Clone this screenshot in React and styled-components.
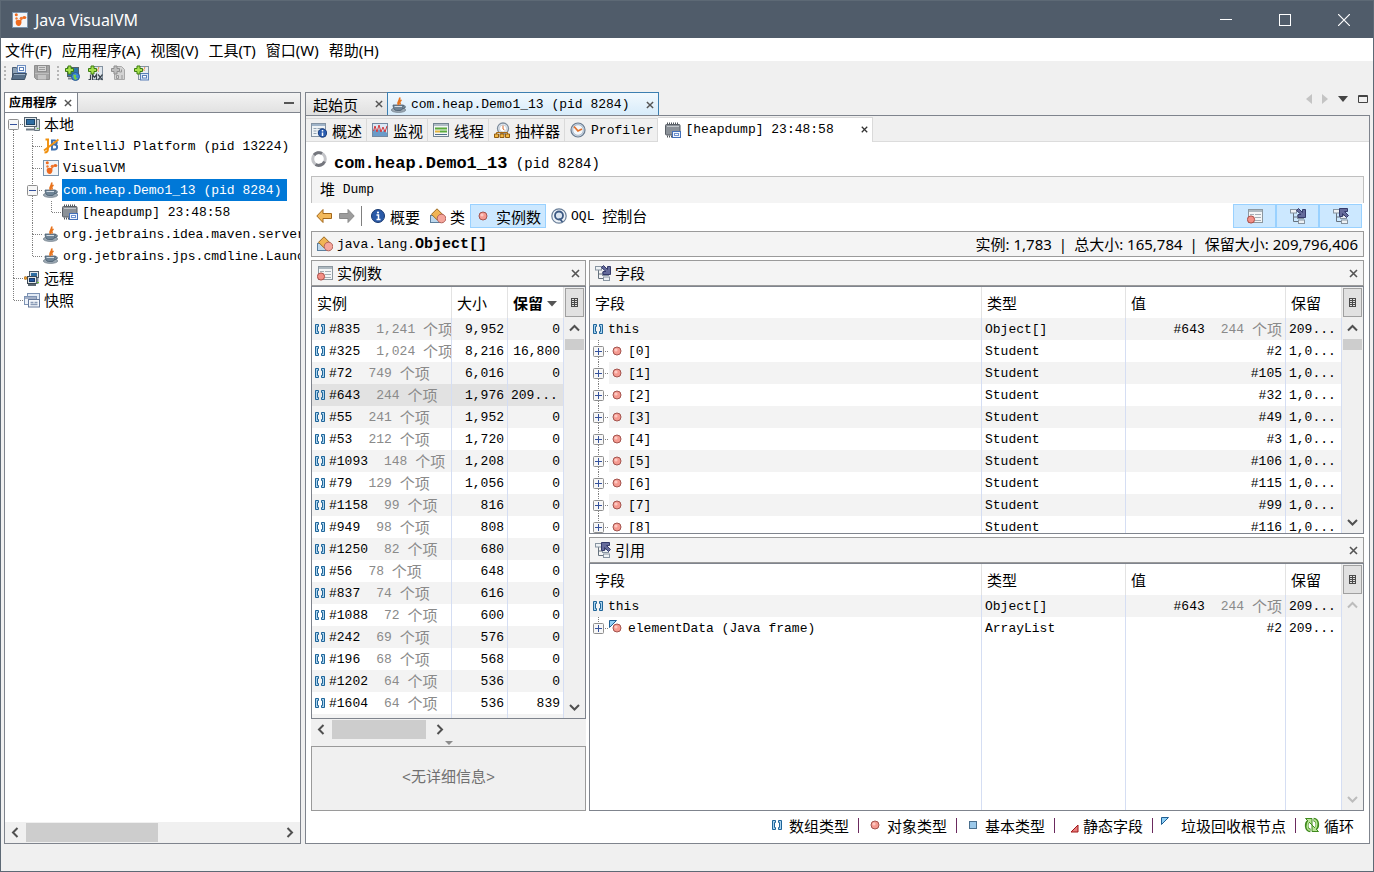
import { Fragment } from "react";
import styled, { createGlobalStyle, css } from "styled-components";

const SANS = '"Noto Sans", "Noto Sans CJK SC", sans-serif';
const MONO = '"Liberation Mono", "Noto Sans CJK SC", monospace';
const HAN = '"Noto Sans CJK SC", sans-serif';

const MENUS = ["文件(F)", "应用程序(A)", "视图(V)", "工具(T)", "窗口(W)", "帮助(H)"];

const TREE = [
  { guides: ["openRoot"], icon: "computer", label: "本地", cjk: true },
  { guides: ["pass", "tee"], icon: "intellij", label: "IntelliJ Platform (pid 13224)" },
  { guides: ["pass", "tee"], icon: "visualvm", label: "VisualVM" },
  { guides: ["pass", "open"], icon: "java", label: "com.heap.Demo1_13 (pid 8284)", selected: true },
  { guides: ["pass", "pass", "end"], icon: "heap", label: "[heapdump] 23:48:58" },
  { guides: ["pass", "tee"], icon: "java", label: "org.jetbrains.idea.maven.server.RemoteMavenServer" },
  { guides: ["pass", "end"], icon: "java", label: "org.jetbrains.jps.cmdline.Launcher" },
  { guides: ["tee"], icon: "remote", label: "远程", cjk: true },
  { guides: ["end"], icon: "snapshot", label: "快照", cjk: true },
];

const INSTANCES = [
  ["#835", "1,241", "9,952", "0"],
  ["#325", "1,024", "8,216", "16,800"],
  ["#72", "749", "6,016", "0"],
  ["#643", "244", "1,976", "209..."],
  ["#55", "241", "1,952", "0"],
  ["#53", "212", "1,720", "0"],
  ["#1093", "148", "1,208", "0"],
  ["#79", "129", "1,056", "0"],
  ["#1158", "99", "816", "0"],
  ["#949", "98", "808", "0"],
  ["#1250", "82", "680", "0"],
  ["#56", "78", "648", "0"],
  ["#837", "74", "616", "0"],
  ["#1088", "72", "600", "0"],
  ["#242", "69", "576", "0"],
  ["#196", "68", "568", "0"],
  ["#1202", "64", "536", "0"],
  ["#1604", "64", "536", "839"],
];

const FIELDS = [
  { root: true, name: "this", type: "Object[]", value: "#643", items: "244", retained: "209..." },
  ...["#2", "#105", "#32", "#49", "#3", "#106", "#115", "#99", "#116"].map((value, i) => ({
    name: `[${i}]`,
    type: "Student",
    value,
    retained: "1,0...",
    icon: "dot",
  })),
];

const REFERENCES = [
  { root: true, name: "this", type: "Object[]", value: "#643", items: "244", retained: "209..." },
  { name: "elementData (Java frame)", type: "ArrayList", value: "#2", retained: "209...", icon: "gcDot", last: true },
];

const LEGEND = [
  ["array", "数组类型"],
  ["dot", "对象类型"],
  ["primitive", "基本类型"],
  ["staticField", "静态字段"],
  ["gcRoot", "垃圾回收根节点"],
  ["loop", "循环"],
];

const cup = (
  <>
    <ellipse cx="7.500" cy="13" rx="7.200" ry="2.500" fill="#9aa7b2" stroke="#66747f" strokeWidth=".6" />
    <path d="M2 8h10.500c0 3-1.500 5.500-3.500 5.500H5.500C3.500 13.500 2 11 2 8z" fill="#6f8496" stroke="#4b5e6e" strokeWidth=".8" />
    <path d="M12 9c3-.8 3 2.500-.8 2.500" fill="none" stroke="#566b7b" strokeWidth="1.200" />
    <path d="M3.500 9.500h7.500" stroke="#d4dfe8" />
    <path d="M8.500.5C10 3 5.500 4 7.500 8M10.500 3c-2 1.200-2.200 2-1.200 4.500" fill="none" stroke="#e8731c" strokeWidth="1.700" />
  </>
);

const plus = <path d="M4 1h3v2.500h2.500v3H7V9H4V6.500H1.500v-3H4z" fill="#a6e04d" stroke="#3d7d12" />;

const hierarchy = (
  <>
    <path d="M3.500 5v8.500H8M3.500 9H8" fill="none" stroke="#66727e" />
    <rect x=".5" y="1.500" width="6" height="3.500" fill="#eef2f5" stroke="#8794a1" />
    <rect x="7.500" y="7.500" width="6" height="3" fill="#eef2f5" stroke="#8794a1" />
    <rect x="8.500" y="12" width="6" height="3.500" fill="#eef2f5" stroke="#8794a1" />
  </>
);

const objectDot = (
  <>
    <circle cx="8" cy="8" r="4" fill="#f59a90" stroke="#a3544e" />
    <circle cx="7" cy="7" r="1.600" fill="#fcc9c2" />
  </>
);

const listBase = (
  <>
    <rect x="1.500" y="1.500" width="14" height="13" fill="#f4f6f7" stroke="#8c979f" />
    <path d="M2 3h13" stroke="#aeb9c0" strokeWidth="2" />
    <path d="M3 6.500h4m1 0h6M3 9.500h4m1 0h6M8 12.500h6" stroke="#a5afb6" />
  </>
);

const brackets = (
  <path
    d="M.5.5h3v2h-1v5h1v2h-3zM9.500.5h-3v2h1v5h-1v2h3z"
    fill="#a9d3f0"
    stroke="#1f6599"
  />
);

const curl = (
  <>
    <path d="M6.500 13.500C1.500 13 2 6 4.500 4.500" fill="none" stroke="#3f8a1d" strokeWidth="3.600" />
    <path d="M1.500 1.500h6.500v6.500z" fill="#b8e596" stroke="#3f8a1d" />
    <path d="M6 13.300C2.500 12.500 2.500 7 5 4" fill="none" stroke="#b8e596" strokeWidth="1.600" />
  </>
);

const ICONS = {
  visualvm: (
    <>
      <rect x=".5" y=".5" width="15" height="15" fill="#f2f5f8" stroke="#7893ad" />
      <path d="M4 8.500c2-1.500 5.500-1 5.500 1.500 0 2-1 4-3 4S3 11 4 8.500z" fill="#ee6a1e" />
      <path d="M8.500 9l1.500-3" stroke="#ee6a1e" strokeWidth="1.200" />
      <ellipse cx="12.300" cy="5.500" rx="2" ry="1.500" fill="#ee6a1e" />
      <circle cx="9.300" cy="6.300" r="1.600" fill="#f1782f" />
      <circle cx="4.300" cy="2.800" r="1.500" fill="#ee6a1e" />
      <circle cx="4.500" cy="6.500" r="1.200" fill="#f1782f" />
    </>
  ),
  openFile: (
    <>
      <path d="M1.500 14V2.500h4l1 2h7V9" fill="#8ea3b8" stroke="#4c5f75" />
      <rect x="6.500" y=".5" width="8" height="7" fill="#f4f8fc" stroke="#6f8fc0" />
      <rect x="8.500" y="2.500" width="4" height="3" fill="#fff" stroke="#5b7fb8" />
      <path d="M.5 14.500l2-6h13l-2 6z" fill="#587089" stroke="#3d5065" />
      <path d="M3 9.500h11" stroke="#9cb0c4" />
    </>
  ),
  save: (
    <>
      <path d="M.5.500h15v14h-13l-2-2z" fill="#a3a3a3" stroke="#8e8e8e" />
      <rect x="3.500" y=".5" width="9" height="6" fill="#d5d5d5" stroke="#8e8e8e" />
      <path d="M5 2.500h6M5 4.500h6" stroke="#9c9c9c" />
      <rect x="4" y="10" width="8" height="4.500" fill="#c4c4c4" />
      <path d="M1 8.500h14" stroke="#bdbdbd" />
    </>
  ),
  addHost: (
    <>
      <rect x="3.500" y="2.500" width="11" height="9" fill="#2e74a8" stroke="#54616b" />
      <path d="M4 13.500h8" stroke="#7d8890" strokeWidth="2" />
      <circle cx="11.500" cy="11.500" r="4" fill="#3d86d8" stroke="#2c598c" />
      <path d="M9.500 9.500l3 .5-1 2 2 1.500-2.500 1.500-1.500-3z" fill="#7ad13f" />
      {plus}
    </>
  ),
  addJmx: (
    <>
      <rect x="5.500" y="1.500" width="10" height="13" fill="#dfe6ed" stroke="#8593a1" />
      <path d="M11.500 2c1 2-2 2 0 4.500" fill="none" stroke="#e97c25" />
      <path d="M3.500 9.500v5h-2M5.500 15V9.500l2 3 2-3V15M11 9.500l4.500 5.500m0-5.500L11 15" fill="none" stroke="#3b4650" strokeWidth="1.200" />
      {plus}
    </>
  ),
  addDump: (
    <>
      <path d="M4.500 1.500h7l3 3v10h-10z" fill="#d3d3d3" stroke="#a8a8a8" />
      <path d="M9.500 7h2v-2.500M6.500 10.500h2v3h-2zM12 10v4" fill="none" stroke="#979797" />
      <path d="M4 1h3v2.500h2.500v3H7V9H4V6.500H1.500v-3H4z" fill="#bdbdbd" stroke="#8f8f8f" />
    </>
  ),
  addSnapshot: (
    <>
      <rect x="5.500" y="1.500" width="10" height="13" fill="#e8edf2" stroke="#8593a1" />
      <path d="M11.500 2c1 2-2 2 0 4" fill="none" stroke="#e97c25" />
      <rect x="7.500" y="8.500" width="8" height="6.500" fill="#dbe8f8" stroke="#5b7fb8" />
      <rect x="9.500" y="10.500" width="4" height="2.500" fill="#fff" stroke="#5b7fb8" />
      {plus}
    </>
  ),
  computer: (
    <>
      <path d="M10.500 3.500h5v11h-5z" fill="#cdd4da" stroke="#68747e" />
      <rect x=".5" y="1.500" width="12" height="9" fill="#e0e6ea" stroke="#55626d" />
      <rect x="2.500" y="3.500" width="8" height="5" fill="#2f6ea3" stroke="#1b4467" />
      <path d="M2 13.500h9" stroke="#6f7b85" strokeWidth="2" />
      <path d="M13 12.500h1.500" stroke="#67c433" />
    </>
  ),
  intellij: (
    <>
      <path d="M9 1.500v10.500M8 2.500h3.500c3 0 3 4 0 4H9m2.500 0c3.500 0 3.500 5 0 5H8" fill="none" stroke="#3d6fae" strokeWidth="1.900" />
      <path d="M2.500 1.500h3.500M5 1v9.500c0 3-1 4-3.500 4M1 12.500L15.500 1.500" fill="none" stroke="#f0900d" strokeWidth="1.900" />
    </>
  ),
  java: cup,
  heap: (
    <>
      <path d="M2 1.500h12M2 14.500h6" stroke="#4f545a" strokeWidth="2" strokeDasharray="1 1" />
      <rect x=".5" y="2.500" width="14.500" height="10.500" rx="1" fill="#8b9198" stroke="#595f66" />
      <path d="M2 4.500h12" stroke="#c0c5ca" />
      <rect x="7.500" y="9.500" width="8" height="6" fill="#f0f5fd" stroke="#4470b8" />
      <rect x="9.500" y="11.500" width="4" height="2" fill="#fff" stroke="#6d92d0" />
    </>
  ),
  remote: (
    <>
      <rect x="5.500" y="1.500" width="9" height="6" fill="#e3e8ec" stroke="#4d5a65" />
      <rect x="7" y="3" width="6" height="3" fill="#2f6ea3" />
      <rect x="3.500" y="6.500" width="9" height="7" fill="#dfe5e9" stroke="#3c4853" />
      <rect x="5.500" y="8.500" width="5" height="3" fill="#2458a0" stroke="#15396b" />
      <path d="M4 15h8" stroke="#5c6872" strokeWidth="2" />
      <path d="M13.500 8v6" stroke="#7f8b95" strokeWidth="2" />
      <circle cx="1.500" cy="8" r="1.500" fill="#e89b2b" stroke="#9b5c0e" strokeWidth=".6" />
      <path d="M13 12.500h2" stroke="#67c433" />
    </>
  ),
  snapshot: (
    <>
      <rect x="3.500" y="1.500" width="12" height="8" fill="#e4ecf6" stroke="#7d93b4" />
      <rect x=".5" y="4.500" width="12" height="8" fill="#eef3fa" stroke="#7d93b4" />
      <rect x="4.500" y="7.500" width="11" height="7.500" fill="#f5f8fc" stroke="#64789a" />
      <path d="M1 6h11M6.500 10.500h3m1 0h3M6.500 12.500h7" stroke="#8a9bb6" strokeWidth="1.400" />
    </>
  ),
  overview: (
    <>
      <rect x=".5" y="1.500" width="14" height="13" fill="#eff3f6" stroke="#8493a3" />
      <path d="M1 3h13" stroke="#9fb3c8" strokeWidth="2" />
      <path d="M2.500 6.500h3m1 0h6M2.500 9h3m1 0h4M2.500 11.500h3" stroke="#93a3b2" />
      <circle cx="11.500" cy="11" r="4.200" fill="#2a5cb0" stroke="#173b7c" />
      <path d="M11.500 10.500V14M11.500 8v1.500" stroke="#fff" strokeWidth="1.500" />
    </>
  ),
  monitor: (
    <>
      <rect x=".5" y="1.500" width="15" height="13" fill="#dce8f4" stroke="#7389a2" />
      <path d="M1 14V9l2-2 2 3 2-3 3 3 2-2 3 3v3z" fill="#6b9bc8" />
      <path d="M1.500 9L3 4l2 6 2-7 2 7 2-5 2 5 2-6" fill="none" stroke="#d4393d" />
    </>
  ),
  threads: (
    <>
      <rect x=".5" y="1.500" width="15" height="13" fill="#f3f6f7" stroke="#738492" />
      <path d="M1 3h14" stroke="#b1bdc6" strokeWidth="2" />
      <path d="M2 6.500h12" stroke="#5aab3b" strokeWidth="2" />
      <path d="M2 9.500h5" stroke="#e0b53b" strokeWidth="2" />
      <path d="M7 9.500h7" stroke="#5aab3b" strokeWidth="2" />
      <path d="M2 12.500h12" stroke="#4c6d8c" />
    </>
  ),
  sampler: (
    <>
      <circle cx="9" cy="6.500" r="5.500" fill="#e7edf3" stroke="#7d8c9c" strokeWidth="1.300" />
      <circle cx="9" cy="6.500" r="3.600" fill="#fff" stroke="#b4bfcb" strokeWidth=".8" />
      <path d="M9 3.500V7l1.500 1" fill="none" stroke="#d5692b" />
      <path d="M2.500 12V10.500h11V12M8 10v2" fill="none" stroke="#a86b15" />
      <path d="M.5 12h4v3.500h-4zM6 12h4v3.500H6zM11.500 12h4v3.500h-4z" fill="#f2b844" stroke="#8f5b11" />
    </>
  ),
  profiler: (
    <>
      <circle cx="8" cy="8" r="7" fill="#cfdbe8" stroke="#697a8e" strokeWidth="1.200" />
      <circle cx="8" cy="8" r="5.300" fill="#f5f8fb" stroke="#9fb0c2" strokeWidth=".8" />
      <path d="M4 4.500L8 9l4-2" fill="none" stroke="#e2702a" strokeWidth="1.800" />
    </>
  ),
  busy: (
    <>
      <circle cx="8" cy="8" r="6.300" fill="none" stroke="#c3c4c8" strokeWidth="3" />
      <path d="M3 4a6.300 6.300 0 0 1 8-1.500M13.500 10.500a6.300 6.300 0 0 1-9 3" fill="none" stroke="#74767d" strokeWidth="3" />
    </>
  ),
  back: <path d="M.8 8L7 1.500v4h8.500v5H7v4z" fill="#f3b95b" stroke="#a3671a" />,
  forward: <path d="M15.200 8L9 1.500v4H.5v5H9v4z" fill="#9d9d9d" stroke="#8b8b8b" />,
  info: (
    <>
      <circle cx="8" cy="8" r="6.500" fill="#2a5aa8" stroke="#18396f" />
      <path d="M6.500 7H8.500v4.500M6.500 11.500h4" fill="none" stroke="#fff" strokeWidth="1.500" />
      <circle cx="8" cy="4.500" r="1.100" fill="#fff" />
    </>
  ),
  classes: (
    <>
      <rect x=".5" y="7.500" width="9" height="7" fill="#bcd7ec" stroke="#5d7f9d" />
      <path d="M7 .8l5.500 5.500L7 11.800 1.500 6.300z" fill="#f0b455" stroke="#9b6a22" />
      <circle cx="11.500" cy="10.500" r="4.300" fill="#f5a69c" stroke="#b06058" />
    </>
  ),
  dot: objectDot,
  oql: (
    <>
      <circle cx="8" cy="8" r="7.200" fill="#eef3f8" stroke="#6a7f99" strokeWidth="1.200" />
      <circle cx="8" cy="7.500" r="4" fill="#dce6f1" stroke="#3c5983" strokeWidth="1.800" />
      <path d="M8.500 10.500l3 3.500" stroke="#3c5983" strokeWidth="1.800" />
    </>
  ),
  instances: (
    <>
      {listBase}
      <circle cx="4" cy="11.500" r="3.600" fill="#f38f86" stroke="#a94d47" />
    </>
  ),
  fields: (
    <>
      {hierarchy}
      <path d="M6.500 2.500l2-2 4 4V1.500h3v8H8v-3h3z" fill="#656b9b" stroke="#353b6b" />
    </>
  ),
  references: (
    <>
      {hierarchy}
      <path d="M6.500.500h8v3h-3l4 4-2 2-4-4v3h-3z" fill="#656b9b" stroke="#353b6b" />
    </>
  ),
  array: <g transform="translate(3 3)">{brackets}</g>,
  primitive: <rect x="4.500" y="4.500" width="7" height="7" fill="#9cc9ea" stroke="#4a6f8e" />,
  staticField: <path d="M15 8v7H8z" fill="#e87d7d" stroke="#a01818" />,
  gcRoot: <path d="M.5.500h7L.500 7.500z" fill="#8fd0f6" stroke="#1f5f94" />,
  gcDot: (
    <>
      {objectDot}
      <path d="M.5.500h7L.500 7.500z" fill="#8fd0f6" stroke="#1f5f94" />
    </>
  ),
  loop: (
    <>
      {curl}
      <g transform="rotate(180 8 8)">{curl}</g>
    </>
  ),
};

function Icon({ name, size = 16 }) {
  return (
    <Svg width={size} height={size} viewBox="0 0 16 16" aria-hidden="true">
      {ICONS[name]}
    </Svg>
  );
}

function ArrayIcon() {
  return (
    <Svg width="10" height="10" viewBox="0 0 10 10" aria-hidden="true">
      {brackets}
    </Svg>
  );
}

function Guide({ kind }) {
  const expander = ["openRoot", "open", "closed", "closedLast"].includes(kind);
  const top = kind !== "openRoot";
  const bottom = kind !== "end" && kind !== "closedLast" && kind !== "open";
  return (
    <Svg width="19" height="22" viewBox="0 0 19 22" aria-hidden="true">
      <g stroke="#808080" strokeDasharray="1 1" shapeRendering="crispEdges">
        {top && <path d="M8.500 0v11" />}
        {(bottom || kind === "open") && <path d="M8.500 11v11" />}
        {kind !== "pass" && <path d="M9 11.500h9" />}
      </g>
      {expander && (
        <>
          <rect x="3.500" y="6.500" width="10" height="10" rx="1" fill="#f7f7f7" stroke="#8f8f8f" />
          <path d="M5 11.500h7" stroke="#34519c" />
          {kind.startsWith("closed") && <path d="M8.500 8v7" stroke="#34519c" />}
        </>
      )}
    </Svg>
  );
}

const CHEVRONS = {
  up: "M2 8.500L6.500 4l4.500 4.500",
  down: "M2 4l4.500 4.500L11 4",
  left: "M8.500 2L4 6.500 8.500 11",
  right: "M4.500 2L9 6.500 4.500 11",
};

function ScrollButton({ dir, muted }) {
  return (
    <ScrollArrow type="button" aria-label={dir} $muted={muted}>
      <Svg width="13" height="13" viewBox="0 0 13 13">
        <path d={CHEVRONS[dir]} fill="none" stroke="currentColor" strokeWidth="2" />
      </Svg>
    </ScrollArrow>
  );
}

function Close({ size = 9, color = "#555" }) {
  return (
    <PlainButton type="button" aria-label="关闭">
      <Svg width={size} height={size} viewBox="0 0 9 9">
        <path d="M1 1l7 7M8 1L1 8" stroke={color} strokeWidth="1.600" />
      </Svg>
    </PlainButton>
  );
}

function VerticalScroll({ muted }) {
  return (
    <ScrollColumn>
      <ColumnButton type="button" aria-label="列">
        <Svg width="7" height="9" viewBox="0 0 7 9">
          <path d="M.5 0v9M3.500 1v8M6.500 0v9M0 .5h7M0 2.500h7M0 4.500h7M0 6.500h7M0 8.500h7" stroke="#4a4a4a" />
        </Svg>
      </ColumnButton>
      <ScrollButton dir="up" muted={muted} />
      <VerticalTrack>{!muted && <VerticalThumb />}</VerticalTrack>
      <ScrollButton dir="down" muted={muted} />
    </ScrollColumn>
  );
}

function Items({ count }) {
  return (
    <Muted>
      {count} <Cjk>个项</Cjk>
    </Muted>
  );
}

function FieldTable({ rows, muted }) {
  return (
    <TableFrame>
      <TableArea>
        <DataTable>
          <colgroup>
            <col />
            <Col $width={144} />
            <Col $width={160} />
            <Col $width={56} />
          </colgroup>
          <thead>
            <tr>
              <Th>字段</Th>
              <Th>类型</Th>
              <Th>值</Th>
              <Th>保留</Th>
            </tr>
          </thead>
          <tbody>
            {rows.map((row, i) => (
              <Row key={row.name} $striped={i % 2 === 0}>
                <Td $flush>
                  {row.root ? (
                    <NameCell $root>
                      <ArrayIcon />
                      <Latin>{row.name}</Latin>
                    </NameCell>
                  ) : (
                    <NameCell>
                      <GuideCell>
                        <Guide kind={row.last ? "closedLast" : "closed"} />
                      </GuideCell>
                      <Icon name={row.icon} />
                      <Latin>{row.name}</Latin>
                    </NameCell>
                  )}
                </Td>
                <Td>{row.type}</Td>
                <Td $right>
                  {row.value}
                  {row.items && <Items count={row.items} />}
                </Td>
                <Td>{row.retained}</Td>
              </Row>
            ))}
            <FillerRow>
              <Td />
              <Td />
              <Td />
              <Td />
            </FillerRow>
          </tbody>
        </DataTable>
      </TableArea>
      <VerticalScroll muted={muted} />
    </TableFrame>
  );
}

function InstanceTable() {
  return (
    <TableFrame>
      <TableArea>
        <DataTable>
          <colgroup>
            <col />
            <Col $width={56} />
            <Col $width={56} />
          </colgroup>
          <thead>
            <tr>
              <Th>实例</Th>
              <Th>大小</Th>
              <Th $sorted>
                保留
                <SortMark width="10" height="6" viewBox="0 0 10 6">
                  <path d="M0 0h10L5 5.500z" fill="#555" />
                </SortMark>
              </Th>
            </tr>
          </thead>
          <tbody>
            {INSTANCES.map(([id, count, size, retained], i) => (
              <Row key={id} $striped={i % 2 === 0} $current={id === "#643"}>
                <Td $flush>
                  <NameCell $root $tight>
                    <ArrayIcon />
                    <Latin>
                      {id}
                      <Items count={count} />
                    </Latin>
                  </NameCell>
                </Td>
                <Td $right>{size}</Td>
                <Td $right={!retained.endsWith("...")}>{retained}</Td>
              </Row>
            ))}
            <FillerRow $striped>
              <Td />
              <Td />
              <Td />
            </FillerRow>
          </tbody>
        </DataTable>
      </TableArea>
      <VerticalScroll />
    </TableFrame>
  );
}

function Panel({ icon, title, children }) {
  return (
    <PanelBox>
      <PanelHeader>
        <Icon name={icon} />
        <PanelTitle>{title}</PanelTitle>
        <Close />
      </PanelHeader>
      {children}
    </PanelBox>
  );
}

export default function App() {
  return (
    <>
      <GlobalStyle />
      <Window>
        <TitleBar>
          <Icon name="visualvm" />
          <WindowTitle>Java VisualVM</WindowTitle>
          <WindowButton type="button" aria-label="最小化">
            <Svg width="12" height="12" viewBox="0 0 12 12">
              <path d="M0 5.500h12" stroke="#fff" />
            </Svg>
          </WindowButton>
          <WindowButton type="button" aria-label="最大化">
            <Svg width="12" height="12" viewBox="0 0 12 12">
              <rect x=".5" y=".5" width="11" height="11" fill="none" stroke="#fff" />
            </Svg>
          </WindowButton>
          <WindowButton type="button" aria-label="关闭">
            <Svg width="12" height="12" viewBox="0 0 12 12">
              <path d="M0 0l12 12M12 0L0 12" stroke="#fff" strokeWidth="1.200" />
            </Svg>
          </WindowButton>
        </TitleBar>

        <MenuBar>
          {MENUS.map((menu) => (
            <MenuItem key={menu} type="button">
              {menu}
            </MenuItem>
          ))}
        </MenuBar>

        <ToolBar>
          <Grip />
          <ToolButton type="button" aria-label="打开"><Icon name="openFile" /></ToolButton>
          <ToolButton type="button" aria-label="保存"><Icon name="save" /></ToolButton>
          <Grip />
          <ToolButton type="button" aria-label="添加主机"><Icon name="addHost" /></ToolButton>
          <ToolButton type="button" aria-label="添加 JMX"><Icon name="addJmx" /></ToolButton>
          <ToolButton type="button" aria-label="添加 Dump"><Icon name="addDump" /></ToolButton>
          <ToolButton type="button" aria-label="添加快照"><Icon name="addSnapshot" /></ToolButton>
        </ToolBar>

        <Workspace>
          <Sidebar>
            <SidebarHeader>
              <SidebarTab>
                应用程序
                <Close size={8} />
              </SidebarTab>
              <MinimizeMark type="button" aria-label="最小化" />
            </SidebarHeader>
            <Tree>
              {TREE.map((node) => (
                <TreeRow key={node.label}>
                  {node.guides.map((kind, i) => (
                    <Guide key={i} kind={kind} />
                  ))}
                  <Icon name={node.icon} />
                  <TreeLabel $selected={node.selected} $cjk={node.cjk}>
                    {node.label}
                  </TreeLabel>
                </TreeRow>
              ))}
            </Tree>
            <HorizontalScroll>
              <ScrollButton dir="left" />
              <HorizontalTrack>
                <HorizontalThumb $share={52} />
              </HorizontalTrack>
              <ScrollButton dir="right" />
            </HorizontalScroll>
          </Sidebar>

          <Main>
            <DocTabs>
              <DocTab>
                <Cjk>起始页</Cjk>
                <Close size={8} />
              </DocTab>
              <DocTab $active>
                <Icon name="java" />
                <DocTabLabel>com.heap.Demo1_13 (pid 8284)</DocTabLabel>
                <Close size={8} />
              </DocTab>
              <DocControls>
                <Svg width="6" height="10" viewBox="0 0 6 10"><path d="M6 0v10L0 5z" fill="#c4c4c4" /></Svg>
                <Svg width="6" height="10" viewBox="0 0 6 10"><path d="M0 0v10l6-5z" fill="#c4c4c4" /></Svg>
                <Svg width="10" height="6" viewBox="0 0 10 6"><path d="M0 0h10L5 6z" fill="#444" /></Svg>
                <Svg width="10" height="8" viewBox="0 0 10 8"><path d="M.5 .5h9v7h-9zM0 1.500h10" fill="none" stroke="#444" /></Svg>
              </DocControls>
            </DocTabs>

            <Editor>
              <ViewTabs>
                <ViewTab type="button"><Icon name="overview" /><Cjk>概述</Cjk></ViewTab>
                <ViewTab type="button"><Icon name="monitor" /><Cjk>监视</Cjk></ViewTab>
                <ViewTab type="button"><Icon name="threads" /><Cjk>线程</Cjk></ViewTab>
                <ViewTab type="button"><Icon name="sampler" /><Cjk>抽样器</Cjk></ViewTab>
                <ViewTab type="button"><Icon name="profiler" /><Latin>Profiler</Latin></ViewTab>
                <ActiveViewTab>
                  <Icon name="heap" />
                  <ActiveViewLabel>[heapdump] 23:48:58</ActiveViewLabel>
                  <Close size={7} color="#333" />
                </ActiveViewTab>
              </ViewTabs>

              <Content>
                <Heading>
                  <Icon name="busy" />
                  <HeadingText>
                    <HeadingName>com.heap.Demo1_13</HeadingName> (pid 8284)
                  </HeadingText>
                </Heading>
                <DumpBar>
                  <Cjk>堆</Cjk> Dump
                </DumpBar>

                <DumpTools>
                  <PlainButton type="button" aria-label="后退"><Icon name="back" /></PlainButton>
                  <ForwardButton type="button" aria-label="前进"><Icon name="forward" /></ForwardButton>
                  <Divider />
                  <DumpButton type="button"><Icon name="info" /><Cjk>概要</Cjk></DumpButton>
                  <DumpButton type="button"><Icon name="classes" /><Cjk>类</Cjk></DumpButton>
                  <DumpButton type="button" $pressed><Icon name="dot" /><Cjk>实例数</Cjk></DumpButton>
                  <DumpButton type="button"><Icon name="oql" /><Latin>OQL <Cjk>控制台</Cjk></Latin></DumpButton>
                  <ViewSwitches>
                    <SwitchButton type="button" aria-label="实例"><Icon name="instances" /></SwitchButton>
                    <SwitchButton type="button" aria-label="字段"><Icon name="fields" /></SwitchButton>
                    <SwitchButton type="button" aria-label="引用"><Icon name="references" /></SwitchButton>
                  </ViewSwitches>
                </DumpTools>

                <ClassBar>
                  <Icon name="classes" />
                  <ClassName>
                    java.lang.<ClassStrong>Object[]</ClassStrong>
                  </ClassName>
                  <ClassStats>
                    <span>实例: 1,783</span>
                    <span>|</span>
                    <span>总大小: 165,784</span>
                    <span>|</span>
                    <span>保留大小: 209,796,406</span>
                  </ClassStats>
                </ClassBar>

                <Panes>
                  <InstanceColumn>
                    <Panel icon="instances" title="实例数">
                      <InstanceTable />
                    </Panel>
                    <InstanceScroll>
                      <ScrollButton dir="left" />
                      <HorizontalTrack>
                        <HorizontalThumb $share={97} />
                      </HorizontalTrack>
                      <ScrollButton dir="right" />
                    </InstanceScroll>
                    <Splitter>
                      <Svg width="8" height="4" viewBox="0 0 8 4"><path d="M0 0h8L4 4z" fill="#8c8c8c" /></Svg>
                    </Splitter>
                    <Details>&lt;无详细信息&gt;</Details>
                  </InstanceColumn>
                  <FieldColumn>
                    <Panel icon="fields" title="字段">
                      <FieldTable rows={FIELDS} />
                    </Panel>
                    <Panel icon="references" title="引用">
                      <FieldTable rows={REFERENCES} muted />
                    </Panel>
                  </FieldColumn>
                </Panes>

                <Legend>
                  {LEGEND.map(([icon, label], i) => (
                    <Fragment key={icon}>
                      {i > 0 && <LegendRule />}
                      <LegendItem>
                        <Icon name={icon} />
                        <Cjk>{label}</Cjk>
                      </LegendItem>
                    </Fragment>
                  ))}
                </Legend>
              </Content>
            </Editor>
          </Main>
        </Workspace>
        <StatusBar />
      </Window>
    </>
  );
}

const GlobalStyle = createGlobalStyle`
  *, *::before, *::after {
    box-sizing: border-box;
  }
  body {
    margin: 0;
    background: #f0f0f0;
    color: #000;
    font-family: ${MONO};
    font-size: 13px;
    line-height: 22px;
  }
  button {
    font: inherit;
    color: inherit;
  }
`;

const Svg = styled.svg`
  display: block;
  flex: none;
`;

// Han glyphs run larger than the Latin ones and hang a little lower
const Cjk = styled.span`
  font-family: ${HAN};
  font-size: 15px;
  line-height: 1;
  vertical-align: -2px;
`;

const Latin = styled.span`
  padding-top: 2px;
  line-height: 20px;
  white-space: nowrap;
`;

const Muted = styled.span`
  margin-left: 16px;
  color: #8a8a8a;
`;

const PlainButton = styled.button`
  display: flex;
  align-items: center;
  padding: 0;
  border: 0;
  background: none;
`;

const Window = styled.div`
  display: flex;
  flex-direction: column;
  height: 100vh;
  border: 1px solid #5d6975;
  background: #f0f0f0;
  overflow: hidden;
`;

const TitleBar = styled.header`
  display: flex;
  align-items: center;
  flex: none;
  height: 37px;
  padding-left: 11px;
  background: #505c6a;
  color: #fff;
`;

const WindowTitle = styled.h1`
  flex: 1;
  margin: 0;
  padding-left: 7px;
  font-family: ${SANS};
  font-size: 16px;
  font-weight: 400;
`;

const WindowButton = styled(PlainButton)`
  justify-content: center;
  width: 59px;
  height: 100%;
`;

const MenuBar = styled.nav`
  display: flex;
  flex: none;
  gap: 10px;
  height: 23px;
  padding-left: 4px;
  background: #fff;
`;

const MenuItem = styled(PlainButton)`
  font-family: ${SANS};
  font-size: 15px;
`;

const ToolBar = styled.div`
  display: flex;
  flex: none;
  height: 31px;
  padding: 4px 0 0 3px;
`;

const Grip = styled.span`
  width: 2px;
  height: 15px;
  margin: 1px 1px 0 0;
  background: repeating-linear-gradient(#b5b5b5 0 2px, transparent 2px 4px);

  &:not(:first-child) {
    margin-left: 4px;
  }
`;

const ToolButton = styled(PlainButton)`
  justify-content: center;
  width: 23px;
  height: 16px;
`;

const Workspace = styled.div`
  display: flex;
  flex: 1;
  gap: 4px;
  min-height: 0;
  padding: 0 3px;
`;

const Sidebar = styled.aside`
  display: flex;
  flex-direction: column;
  flex: 0 0 297px;
  border: 1px solid #7f848d;
  background: #fff;
  overflow: hidden;
`;

const SidebarHeader = styled.div`
  display: flex;
  justify-content: space-between;
  align-items: center;
  height: 20px;
  border-bottom: 1px solid #7f848d;
  background: linear-gradient(#f3f3f3, #e2e2e2);
`;

const SidebarTab = styled.div`
  display: flex;
  align-items: center;
  gap: 7px;
  height: 100%;
  padding: 0 5px 0 4px;
  border-right: 1px solid #7f848d;
  background: #fff;
  font-family: ${SANS};
  font-size: 12px;
  font-weight: 700;
`;

const MinimizeMark = styled.button`
  width: 10px;
  height: 2px;
  margin-right: 6px;
  padding: 0;
  border: 0;
  background: #555;
`;

const Tree = styled.div`
  flex: 1;
  overflow: hidden;
`;

const TreeRow = styled.div`
  display: flex;
  align-items: center;
  height: 22px;
`;

const TreeLabel = styled.span`
  margin-left: 3px;
  padding: 2px 3px 0 1px;
  line-height: 20px;
  white-space: nowrap;
  ${({ $cjk }) =>
    $cjk &&
    css`
      padding-top: 0;
      font-family: ${HAN};
      font-size: 15px;
    `}
  ${({ $selected }) =>
    $selected &&
    css`
      padding-right: 6px;
      background: #0078d7;
      color: #fff;
    `}
`;

const ScrollArrow = styled.button`
  display: flex;
  align-items: center;
  justify-content: center;
  flex: none;
  width: 21px;
  height: 21px;
  padding: 0;
  border: 0;
  background: #f0f0f0;
  color: ${({ $muted }) => ($muted ? "#bcbcbc" : "#505050")};
`;

const HorizontalScroll = styled.div`
  display: flex;
  flex: none;
  height: 21px;
  background: #f0f0f0;
`;

const HorizontalTrack = styled.div`
  flex: 1;
`;

const HorizontalThumb = styled.div`
  width: ${({ $share }) => $share}%;
  height: 19px;
  margin-top: 1px;
  background: #cdcdcd;
`;

const Main = styled.main`
  display: flex;
  flex-direction: column;
  flex: 1;
  min-width: 0;
`;

const DocTabs = styled.div`
  display: flex;
  flex: none;
  height: 24px;
`;

const DocTab = styled.div`
  display: flex;
  align-items: center;
  justify-content: space-between;
  width: 82px;
  height: 23px;
  padding: 0 4px 0 7px;
  border: 1px solid #7f848d;
  border-right: 0;
  border-bottom: 0;
  background: linear-gradient(#f3f3f3, #e0e0e0);
  ${({ $active }) =>
    $active &&
    css`
      width: 272px;
      height: 24px;
      padding-left: 3px;
      border: 1px solid #3c7fb1;
      border-bottom: 0;
      background: linear-gradient(#f2f9fe, #d6ebfa);
    `}
`;

const DocTabLabel = styled.span`
  flex: 1;
  padding-left: 4px;
`;

const DocControls = styled.div`
  display: flex;
  align-items: center;
  gap: 10px;
  margin-left: auto;
  padding: 0 2px 10px 0;
`;

const Editor = styled.section`
  display: flex;
  flex-direction: column;
  flex: 1;
  min-height: 0;
  margin-top: -1px;
  border: 1px solid #7f848d;
  background: #fff;
`;

const ViewTabs = styled.div`
  display: flex;
  align-items: flex-end;
  flex: none;
  height: 26px;
  background: linear-gradient(#dcdcdc, #dcdcdc) bottom / 100% 1px no-repeat #f0f0f0;
`;

const ViewTab = styled(PlainButton)`
  gap: 5px;
  height: 24px;
  padding: 0 4px 0 5px;
  border: 1px solid #dadada;
  border-left: 0;
  background: #f0f0f0;
`;

const ActiveViewTab = styled.div`
  display: flex;
  align-items: center;
  width: 215px;
  height: 25px;
  padding: 0 4px 1px 7px;
  border-top: 1px solid #dadada;
  border-right: 1px solid #dadada;
  background: #fff;
`;

const ActiveViewLabel = styled.span`
  flex: 1;
  padding-left: 4px;
`;

const Content = styled.div`
  display: flex;
  flex-direction: column;
  flex: 1;
  min-height: 0;
  padding: 0 5px;
`;

const Heading = styled.div`
  display: flex;
  align-items: center;
  flex: none;
  height: 34px;
`;

const HeadingText = styled.h2`
  margin: 0;
  padding: 10px 0 0 7px;
  font-size: 14px;
  font-weight: 400;
`;

const HeadingName = styled.strong`
  font-size: 17px;
`;

const DumpBar = styled.div`
  flex: none;
  height: 27px;
  padding: 2px 8px;
  border: 1px solid #bfbfbf;
  border-bottom: 0;
  background: #f4f4f4;
`;

const DumpTools = styled.div`
  display: flex;
  align-items: center;
  flex: none;
  height: 28px;
  padding: 0 2px 2px 5px;
`;

const ForwardButton = styled(PlainButton)`
  margin-left: 7px;
`;

const Divider = styled.span`
  width: 1px;
  height: 20px;
  margin: 0 3px 0 6px;
  background: #7f7f7f;
`;

const DumpButton = styled(PlainButton)`
  gap: 4px;
  height: 24px;
  padding: 0 4px;
  border: 1px solid transparent;
  ${({ $pressed }) =>
    $pressed &&
    css`
      gap: 5px;
      border-color: #99d1ff;
      background: #cce8ff;
    `}
`;

const ViewSwitches = styled.div`
  display: flex;
  margin-left: auto;
`;

const SwitchButton = styled(PlainButton)`
  justify-content: center;
  width: 43px;
  height: 24px;
  border: 1px solid #99d1ff;
  background: #cce8ff;
`;

const ClassBar = styled.div`
  display: flex;
  align-items: center;
  flex: none;
  height: 26px;
  padding: 0 5px;
  border: 1px solid #9a9a9a;
  background: #f4f4f4;
`;

const ClassName = styled.span`
  flex: 1;
  padding: 2px 0 0 4px;
`;

const ClassStrong = styled.strong`
  font-size: 15px;
`;

const ClassStats = styled.div`
  display: flex;
  gap: 7px;
  font-family: ${SANS};
  font-size: 15px;
`;

const Panes = styled.div`
  display: flex;
  flex: 1;
  gap: 3px;
  min-height: 0;
  margin-top: 3px;
`;

const InstanceColumn = styled.div`
  display: flex;
  flex-direction: column;
  flex: 0 0 275px;
  background: #f0f0f0;
`;

const FieldColumn = styled.div`
  display: flex;
  flex-direction: column;
  flex: 1;
  gap: 3px;
  min-width: 0;
`;

const PanelBox = styled.section`
  display: flex;
  flex-direction: column;
  flex: 1 1 0;
  min-height: 0;
`;

const PanelHeader = styled.div`
  display: flex;
  align-items: center;
  flex: none;
  height: 26px;
  padding: 0 5px;
  border: 1px solid #9a9a9a;
  background: #f4f4f4;
`;

const PanelTitle = styled.h3`
  flex: 1;
  margin: 0;
  padding-left: 4px;
  font-family: ${SANS};
  font-size: 15px;
  font-weight: 400;
`;

const TableFrame = styled.div`
  display: flex;
  flex: 1;
  min-height: 0;
  border: 1px solid #7f848d;
  background: #fff;
  overflow: hidden;
`;

const TableArea = styled.div`
  flex: 1;
  min-width: 0;
  overflow: hidden;
`;

const DataTable = styled.table`
  width: 100%;
  height: 100%;
  table-layout: fixed;
  border-collapse: separate;
  border-spacing: 0;
`;

const Col = styled.col`
  width: ${({ $width }) => $width}px;
`;

const Th = styled.th`
  height: 31px;
  padding: 0 0 0 5px;
  border-right: 1px solid #e3e3e3;
  font-family: ${HAN};
  font-size: 15px;
  font-weight: ${({ $sorted }) => ($sorted ? 700 : 400)};
  text-align: left;
  white-space: nowrap;
`;

const SortMark = styled.svg`
  margin-left: 4px;
  vertical-align: 2px;
`;

const Td = styled.td`
  padding: ${({ $flush }) => ($flush ? "0" : "2px 3px 0")};
  border-right: 1px solid #d5def3;
  line-height: 20px;
  text-align: ${({ $right }) => ($right ? "right" : "left")};
  white-space: nowrap;
  overflow: hidden;
`;

const Row = styled.tr`
  height: 22px;
  background: ${({ $striped, $current }) => ($current ? "#e2e2e2" : $striped ? "#f3f3f3" : "#fff")};
`;

const FillerRow = styled.tr`
  background: ${({ $striped }) => ($striped ? "#f3f3f3" : "#fff")};
`;

const NameCell = styled.div`
  display: flex;
  align-items: center;
  gap: ${({ $root, $tight }) => ($root ? ($tight ? 4 : 5) : 3)}px;
  height: 22px;
  padding-left: ${({ $root }) => ($root ? 3 : 0)}px;
  overflow: hidden;
`;

const GuideCell = styled.span`
  margin-right: -3px;
  background: #fff;
`;

const ScrollColumn = styled.div`
  display: flex;
  flex-direction: column;
  flex: 0 0 21px;
  background: #f0f0f0;
`;

const ColumnButton = styled.button`
  display: flex;
  align-items: center;
  justify-content: center;
  flex: none;
  width: 19px;
  height: 29px;
  margin: 1px;
  padding: 0;
  border: 1px solid #a0a0a0;
  background: #e1e1e1;
`;

const VerticalTrack = styled.div`
  flex: 1;
`;

const VerticalThumb = styled.div`
  width: 19px;
  height: 11px;
  margin: 0 1px;
  background: #cdcdcd;
`;

const InstanceScroll = styled(HorizontalScroll)`
  width: 139px;
  height: 22px;
`;

const Splitter = styled.div`
  display: flex;
  justify-content: center;
  flex: none;
  height: 5px;
`;

const Details = styled.div`
  display: flex;
  align-items: center;
  justify-content: center;
  flex: none;
  height: 65px;
  border: 1px solid #9a9a9a;
  color: #707070;
  font-size: 15px;
`;

const Legend = styled.footer`
  display: flex;
  align-items: center;
  justify-content: flex-end;
  flex: none;
  height: 32px;
  padding: 0 10px 4px 0;
`;

const LegendItem = styled.span`
  display: flex;
  align-items: center;
  gap: 4px;
`;

const LegendRule = styled.span`
  width: 1px;
  height: 15px;
  margin: 0 8px 0 9px;
  background: #6b2a5e;
`;

const StatusBar = styled.div`
  flex: none;
  height: 27px;
`;
